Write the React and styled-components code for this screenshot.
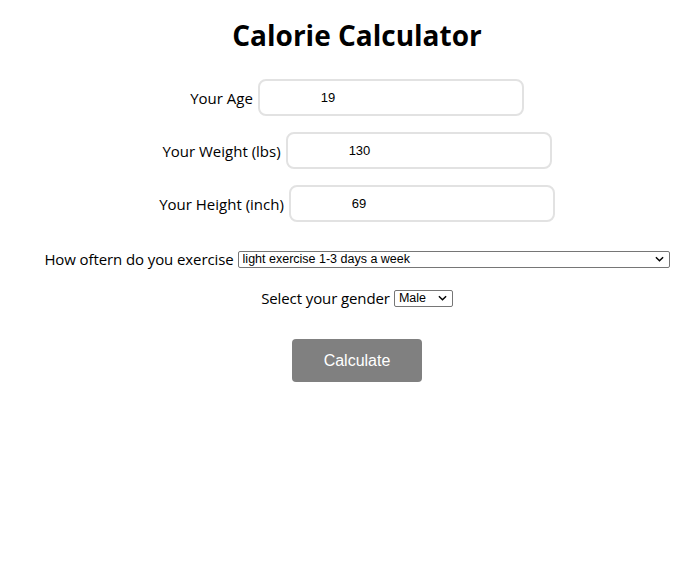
import React from 'react'
import styled, { createGlobalStyle } from 'styled-components'

const GlobalStyle = createGlobalStyle`
    body {
        margin: 0;
        font-family: "Open Sans", "Noto Sans", sans-serif;
        color: #000;
        background: #fff;
    }
`

const chevron = `url("data:image/svg+xml,%3Csvg xmlns='http://www.w3.org/2000/svg' width='10' height='6' viewBox='0 0 10 6'%3E%3Cpath d='M1 1l4 4 4-4' fill='none' stroke='%23000' stroke-width='1.6'/%3E%3C/svg%3E")`

const Page = styled.div`
    padding: 13px 0 0 16px;
    display: flex;
    flex-direction: column;
    align-items: center;
`

const Title = styled.h1`
    margin: 0 0 22px;
    font-size: 28px;
    font-weight: 700;
    line-height: 44px;
`

const Field = styled.div`
    display: flex;
    align-items: center;
    gap: 5px;
    margin-bottom: 16px;
    font-size: 15px;
`

const TextInput = styled.input`
    width: 266px;
    height: 37px;
    box-sizing: border-box;
    border: 2px solid #e2e2e2;
    border-radius: 8px;
    padding: 0 0 0 61px;
    font-family: "Liberation Sans", Arial, sans-serif;
    font-size: 13px;
    color: #000;
    outline: none;
`

const SelectRow = styled.div`
    display: flex;
    align-items: center;
    gap: 4px;
    font-size: 15px;
    letter-spacing: -0.1px;
    margin-top: ${p => p.$top}px;
`

const Select = styled.select`
    appearance: none;
    width: ${p => p.$width}px;
    height: 17px;
    box-sizing: border-box;
    font-family: "Liberation Sans", Arial, sans-serif;
    font-size: 12.5px;
    letter-spacing: 0;
    padding: 0 0 0 4px;
    border: 1px solid #767676;
    border-radius: 2px;
    background: #fff ${chevron} no-repeat right 5px center / 9px 6px;
    color: #000;
`

const Button = styled.button`
    margin-top: 31px;
    width: 130px;
    height: 43px;
    border: none;
    border-radius: 4px;
    background: #808080;
    color: #fff;
    font-family: "Liberation Sans", Arial, sans-serif;
    font-size: 16px;
`

const App = () => (
    <>
        <GlobalStyle />
        <Page>
            <Title>Calorie Calculator</Title>
            <Field>
                <label>Your Age</label>
                <TextInput defaultValue="19" />
            </Field>
            <Field>
                <label>Your Weight (lbs)</label>
                <TextInput defaultValue="130" />
            </Field>
            <Field>
                <label>Your Height (inch)</label>
                <TextInput defaultValue="69" />
            </Field>
            <SelectRow $top={11}>
                <label>How oftern do you exercise</label>
                <Select $width={432} defaultValue="light">
                    <option value="light">light exercise 1-3 days a week</option>
                </Select>
            </SelectRow>
            <SelectRow $top={19}>
                <label>Select your gender</label>
                <Select $width={59} defaultValue="male">
                    <option value="male">Male</option>
                    <option value="female">Female</option>
                </Select>
            </SelectRow>
            <Button>Calculate</Button>
        </Page>
    </>
)

export default App
